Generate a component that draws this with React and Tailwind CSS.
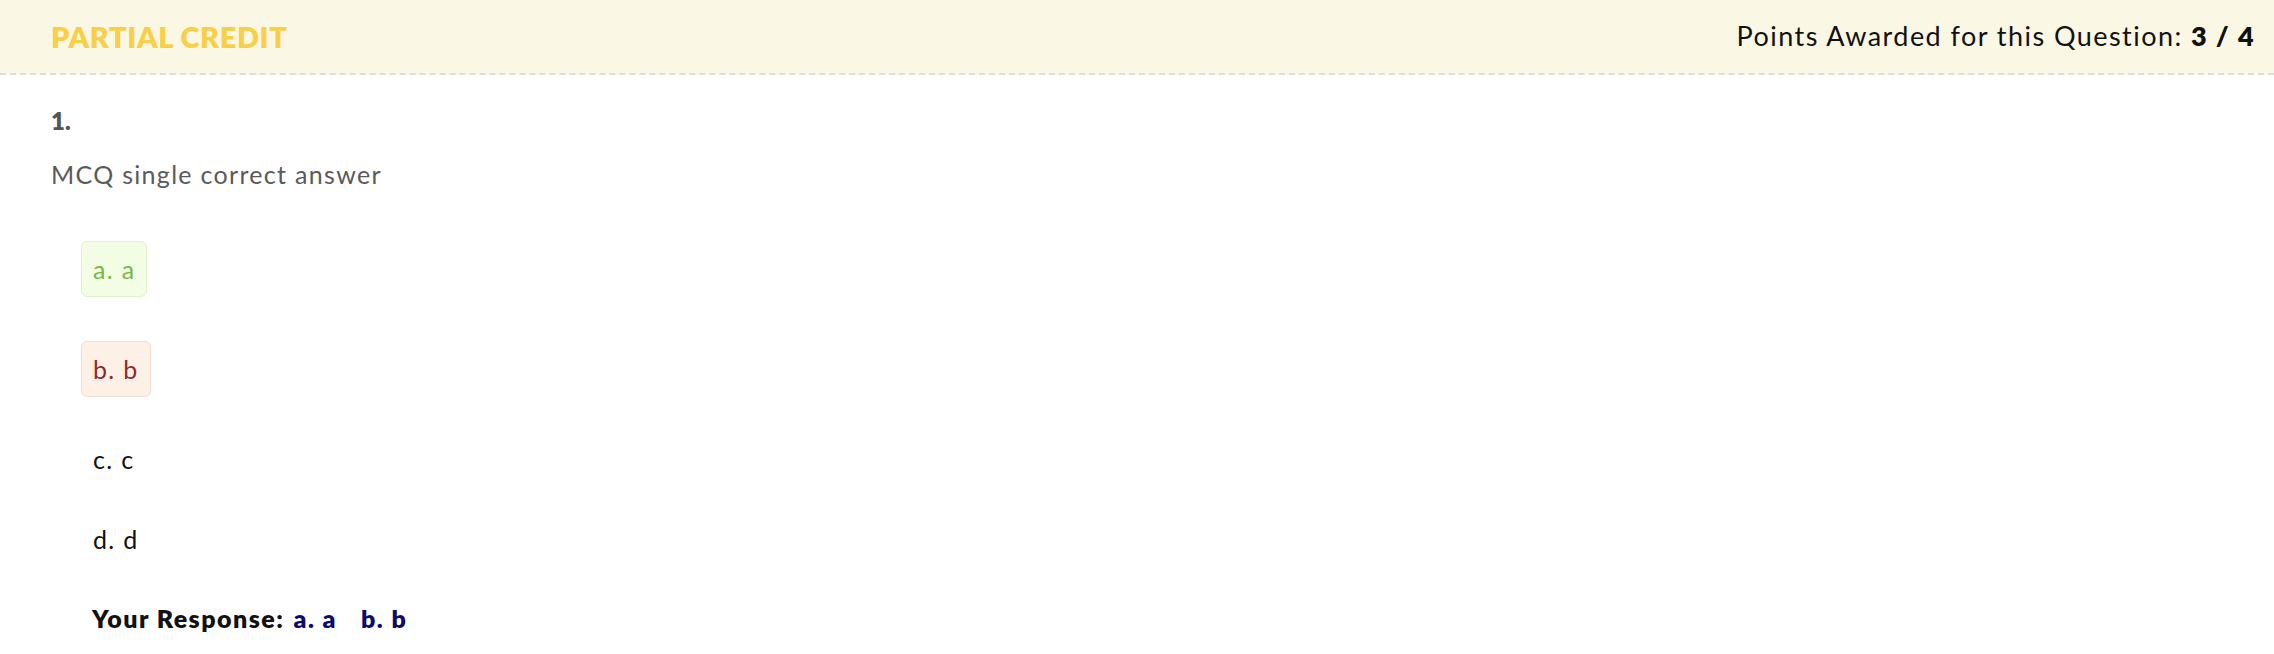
import React from 'react';

const options = [
  { label: 'a. a', state: 'correct' },
  { label: 'b. b', state: 'wrong' },
  { label: 'c. c', state: 'none' },
  { label: 'd. d', state: 'none' },
];

function Option({ label, state, className }) {
  const look =
    state === 'correct'
      ? 'bg-[#f2fde3] border-[#e1f1c9] text-[#7ab648]'
      : state === 'wrong'
      ? 'bg-[#fcf0e7] border-[#f5dccf] text-[#8e2a2d]'
      : 'bg-transparent border-transparent text-[#111111]';
  return (
    <div className={`self-start rounded-[6px] border px-[11px] text-[25px] leading-[30px] tracking-[1.3px] ${look} ${className}`}>
      {label}
    </div>
  );
}

export default function App() {
  return (
    <div className="w-full min-h-screen bg-white font-['Lato','Liberation_Sans',sans-serif]">
      {/* header bar */}
      <div className="h-[75px] flex items-center justify-between pl-[51px] pr-[19px] bg-[#faf7e4] border-b-2 border-dashed border-[#d7dfe1]">
        <span className="text-[29px] font-extrabold uppercase text-[#f9cf46] tracking-[0.6px]">Partial Credit</span>
        <span className="text-[27px] text-[#111111] tracking-[1.45px]">
          Points Awarded for this Question: <span className="font-extrabold">3 / 4</span>
        </span>
      </div>

      <div className="flex flex-col pl-[51px]">
        <div className="mt-[32px] text-[24px] leading-[28px] font-extrabold text-[#555555]">1.</div>
        <div className="mt-[24px] text-[25px] leading-[30px] text-[#5a5a5a] tracking-[1.3px]">MCQ single correct answer</div>

        <div className="flex flex-col pl-[30px]">
          <Option {...options[0]} className="mt-[52px] py-[12px]" />
          <Option {...options[1]} className="mt-[44px] py-[12px]" />
          <Option {...options[2]} className="mt-[46px]" />
          <Option {...options[3]} className="mt-[48px]" />

          <div className="mt-[48px] pl-[11px] text-[25px] leading-[30px] font-extrabold text-[#111111] tracking-[1.45px]">
            Your Response:{' '}
            <span className="text-[#0c0c6e] ml-[2px]">a. a</span>
            <span className="text-[#0c0c6e] ml-[24px]">b. b</span>
          </div>
        </div>
      </div>
    </div>
  );
}
